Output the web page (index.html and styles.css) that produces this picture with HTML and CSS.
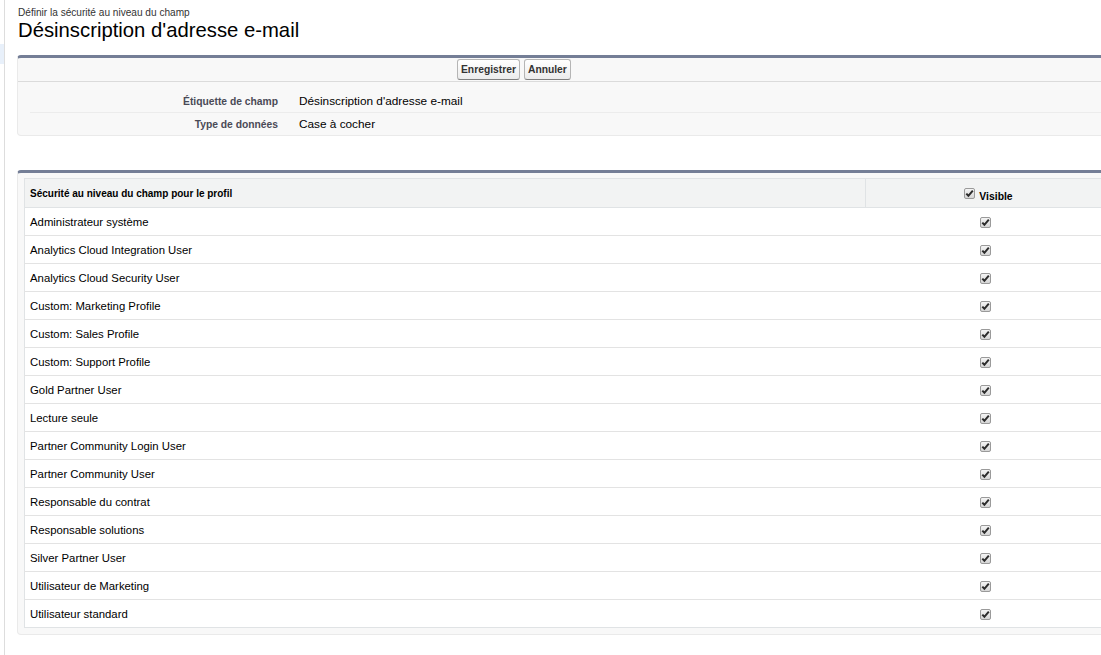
FILE: index.html
```html
<!DOCTYPE html>
<html lang="fr">
<head>
  <meta charset="UTF-8" />
  <title>Définir la sécurité au niveau du champ</title>
  <link rel="stylesheet" href="styles.css">
</head>
<body>
  <div class="page">
    <div class="side"><div class="side-tab"></div></div>
    <div class="main">
      <div class="ptitle">
        <div class="crumb">Définir la sécurité au niveau du champ</div>
        <h1>Désinscription d'adresse e-mail</h1>
      </div>

      <div class="block">
        <div class="btn-row">
          <button class="btn">Enregistrer</button>
          <button class="btn">Annuler</button>
        </div>
        <div class="detail">
          <div class="drow">
            <div class="dlabel">Étiquette de champ</div>
            <div class="dval">Désinscription d'adresse e-mail</div>
          </div>
          <div class="drow">
            <div class="dlabel">Type de données</div>
            <div class="dval">Case à cocher</div>
          </div>
        </div>
      </div>

      <div class="block block-list">
        <table class="list">
          <thead>
            <tr>
              <th class="col-name">Sécurité au niveau du champ pour le profil</th>
              <th class="col-vis"><span class="cb"></span>Visible</th>
            </tr>
          </thead>
          <tbody id="rows"></tbody>
        </table>
      </div>
    </div>
  </div>

  <script>
    const profiles = [
      'Administrateur système',
      'Analytics Cloud Integration User',
      'Analytics Cloud Security User',
      'Custom: Marketing Profile',
      'Custom: Sales Profile',
      'Custom: Support Profile',
      'Gold Partner User',
      'Lecture seule',
      'Partner Community Login User',
      'Partner Community User',
      'Responsable du contrat',
      'Responsable solutions',
      'Silver Partner User',
      'Utilisateur de Marketing',
      'Utilisateur standard'
    ];

    const check = '<svg viewBox="0 0 11 11" width="11" height="11"><path d="M2.3 5.6 L4.4 7.8 L8.8 2.6" fill="none" stroke="#2b2b2b" stroke-width="2"/></svg>';

    const tbody = document.getElementById('rows');
    profiles.forEach(name => {
      const tr = document.createElement('tr');
      tr.innerHTML = `<td class="col-name">${name}</td><td class="col-vis"><span class="cb">${check}</span></td>`;
      tbody.appendChild(tr);
    });
    document.querySelector('th .cb').innerHTML = check;
  </script>
</body>
</html>
```

FILE: styles.css
```css
body {
  margin: 0;
  background: #fff;
  color: #000;
  font-family: 'Liberation Sans', Arial, sans-serif;
  overflow: hidden;
}
.page {
  display: flex;
  min-height: 655px;
}
.side {
  width: 4px;
  flex: none;
  border-right: 1px solid #dddddd;
  padding-top: 44px;
}
.side-tab {
  height: 20px;
  background: #e8f0fa;
}
.main {
  padding-left: 12px;
  flex: none;
  width: 1120px;
}
.ptitle {
  padding: 7px 0 0 1px;
  height: 48px;
}
.crumb {
  font-size: 10.1px;
  color: #333;
  line-height: 11px;
}
h1 {
  margin: 0;
  font-size: 20.3px;
  font-weight: normal;
  color: #000;
  line-height: 24px;
}
.block {
  width: 1095px;
  background: #f8f8f8;
  border: 1px solid #eaeaea;
  border-top: 3px solid #747e96;
  border-radius: 4px;
}
.btn-row {
  height: 23px;
  border-bottom: 1px solid #dbdbdb;
  padding-left: 439px;
  display: flex;
  align-items: center;
  gap: 4px;
}
.btn {
  height: 21px;
  padding: 0 3px;
  font-family: 'Liberation Sans', Arial, sans-serif;
  font-size: 10.3px;
  font-weight: bold;
  color: #333;
  background: linear-gradient(#ffffff, #ececec);
  border: 1px solid #b5b5b5;
  border-bottom-color: #7f7f7f;
  border-radius: 3px;
}
.detail {
  margin-left: 12px;
  padding: 8px 0 0;
}
.drow {
  display: flex;
  height: 22px;
  align-items: center;
  border-bottom: 1px solid #ececec;
}
.drow:last-child {
  border-bottom: none;
}
.dlabel {
  width: 248px;
  text-align: right;
  font-size: 10.3px;
  font-weight: bold;
  color: #4a4a56;
}
.dval {
  padding-left: 21px;
  font-size: 11.8px;
  color: #000;
}
.block-list {
  margin-top: 34px;
  padding: 5px 0 6px 6px;
}
.list {
  width: 1081px;
  border-collapse: collapse;
  background: #fff;
  border: 1px solid #e0e3e5;
}
.list th {
  background: #f2f3f3;
  height: 28px;
  padding: 0 5px;
  font-size: 10px;
  font-weight: bold;
  color: #000;
  text-align: left;
  border-bottom: 1px solid #e0e3e5;
}
.list th.col-vis {
  text-align: center;
  border-left: 1px solid #e0e3e5;
  vertical-align: bottom;
  padding: 0 5px 5px 12px;
  height: 23px;
  font-size: 10.4px;
}
.list th .cb {
  margin-right: 4px;
  vertical-align: 1px;
}
.list td {
  height: 27px;
  padding: 0 5px;
  font-size: 11.35px;
  border-bottom: 1px solid #e3e3e3;
}
.list tr:last-child td {
  border-bottom: none;
}
.col-name {
  width: 830px;
}
.list td.col-vis {
  text-align: center;
  padding-left: 7px;
}
.cb {
  display: inline-block;
  width: 11px;
  height: 11px;
  box-sizing: border-box;
  border: 1px solid #9a9a9a;
  border-radius: 2px;
  background: linear-gradient(#f4f4f4, #d6d6d6);
  vertical-align: middle;
  position: relative;
}
.cb svg {
  position: absolute;
  left: -1px;
  top: -1px;
}
```
